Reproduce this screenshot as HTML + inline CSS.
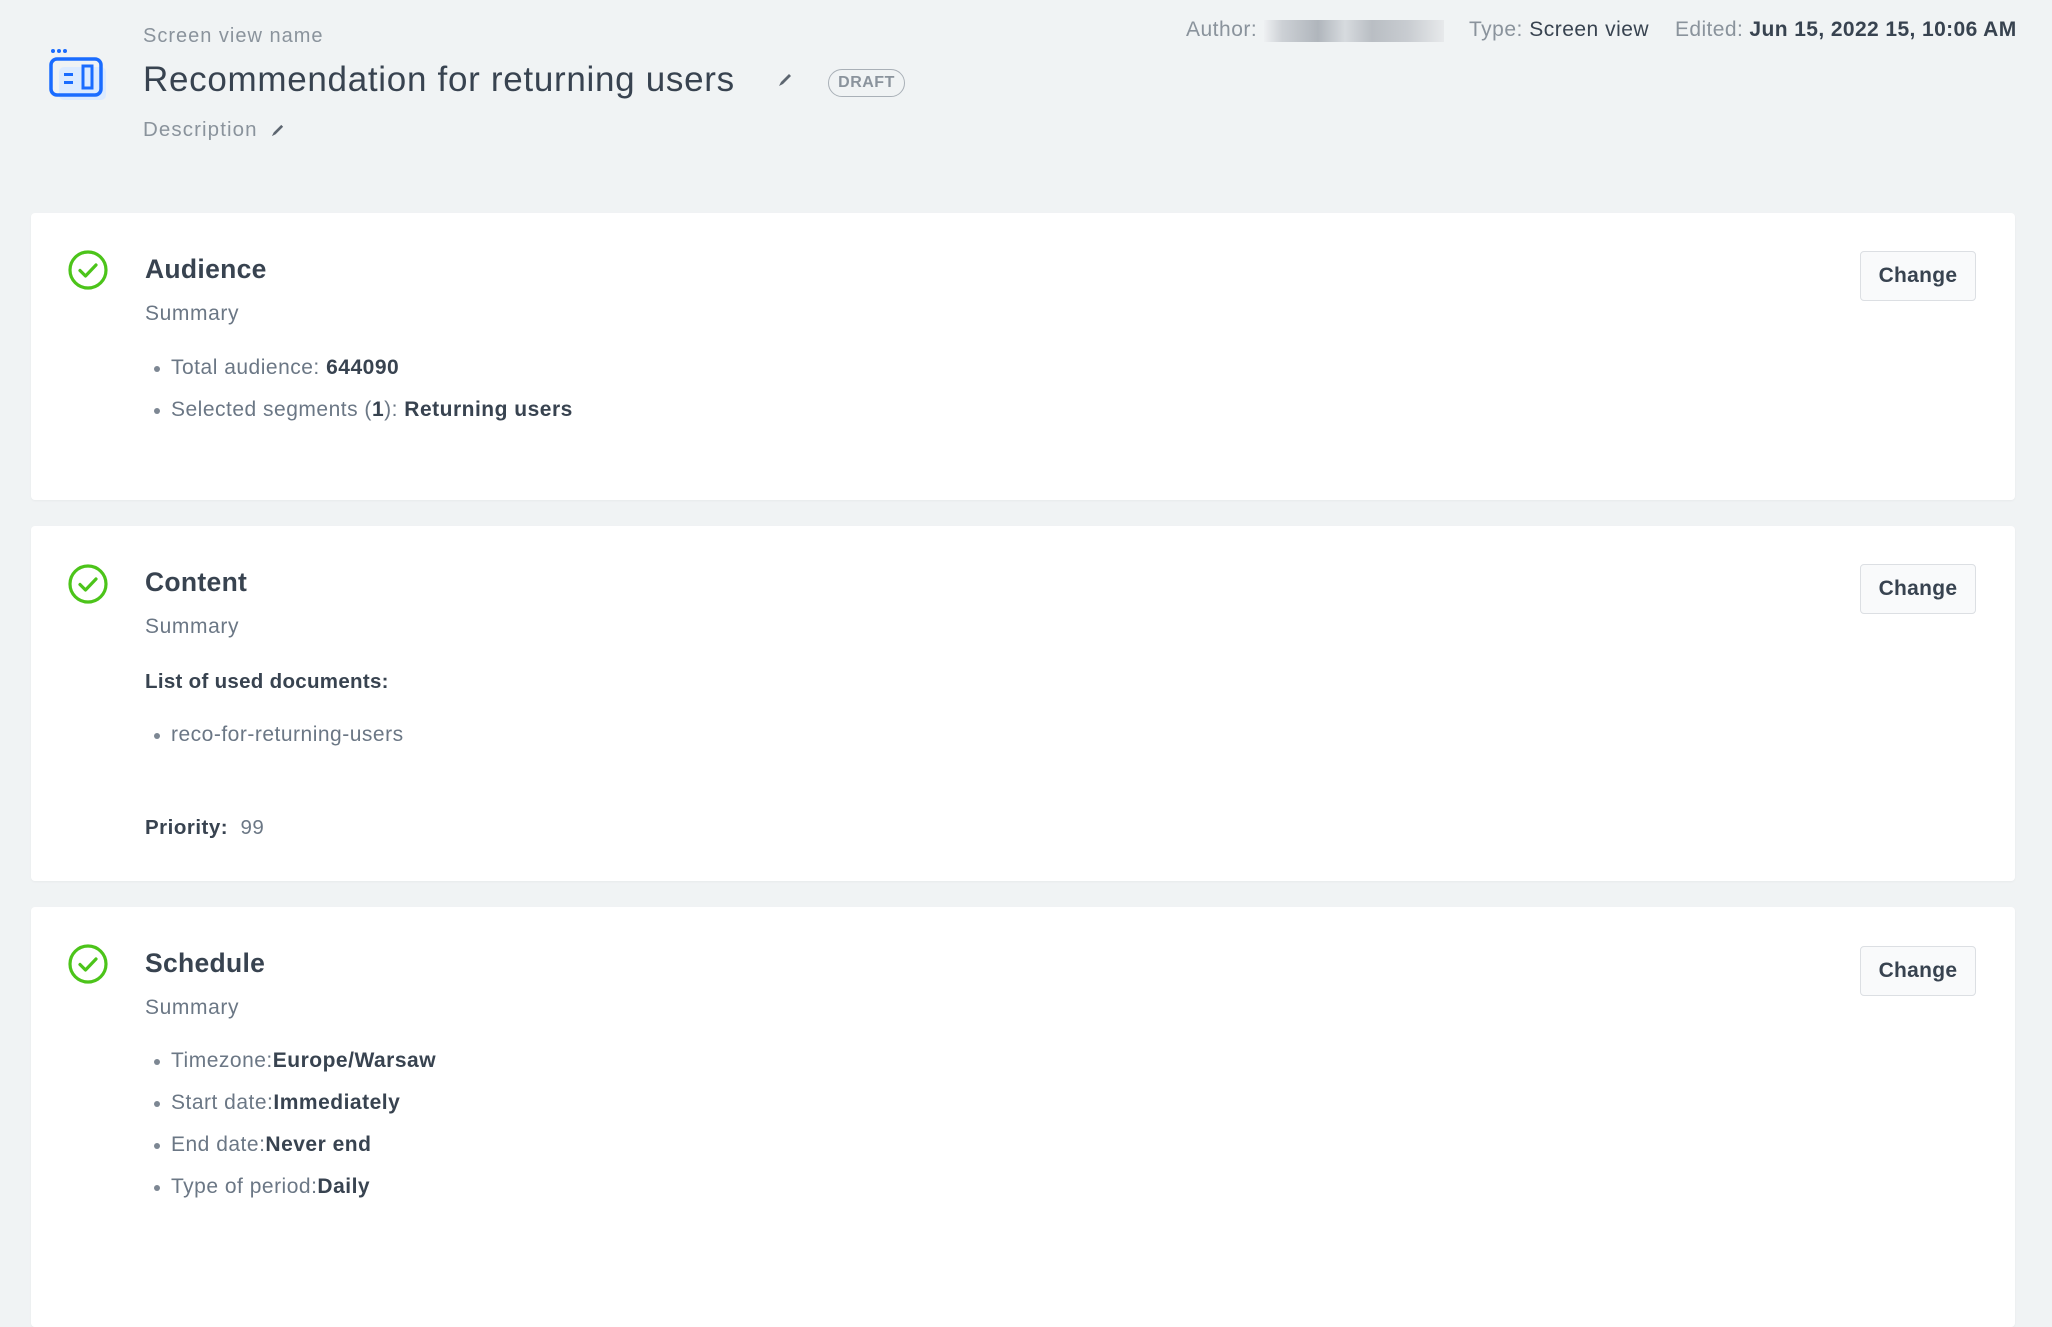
<!DOCTYPE html>
<html><head><meta charset="utf-8">
<style>
*{margin:0;padding:0;box-sizing:border-box}
html,body{width:2052px;height:1316px;overflow:hidden;background:#f0f3f4;font-family:"Liberation Sans",sans-serif;}
.a{position:absolute;white-space:nowrap}
.g{color:#8a939c}
.d{color:#384350}
.card{position:absolute;left:31px;width:1984px;background:#fff;border-radius:4px;box-shadow:0 1px 2px rgba(0,0,0,0.04)}
.h{position:absolute;left:114px;font-size:26.5px;color:#384350;font-weight:bold;line-height:30px;letter-spacing:0.3px}
.s{position:absolute;left:114px;font-size:21px;color:#6b7785;line-height:24px;letter-spacing:0.6px}
.li{position:absolute;left:140px;font-size:21px;color:#6b7785;line-height:24px;white-space:nowrap;letter-spacing:0.5px}
.li:before{content:"";position:absolute;left:-17px;top:10px;width:6px;height:6px;border-radius:50%;background:#7d8793}
.li b{color:#384350}
.btn{position:absolute;left:1829px;width:116px;height:50px;border:1.5px solid #dcdfe3;border-radius:4px;background:#f9fafb;color:#384350;font-size:21px;font-weight:bold;text-align:center;line-height:47px;letter-spacing:0.3px}
.chk{position:absolute;left:36px}
</style></head><body>

<svg class="a" style="left:48px;top:46px" width="62" height="58" viewBox="0 0 62 58">
<circle cx="5" cy="5" r="2" fill="#1a6cff"/><circle cx="11" cy="5" r="2" fill="#1a6cff"/><circle cx="17" cy="5" r="2" fill="#1a6cff"/>
<rect x="11" y="21" width="47" height="33" rx="5" fill="#dcebff"/>
<rect x="3" y="13" width="50" height="36" rx="6" fill="none" stroke="#1a6cff" stroke-width="3.5"/>
<rect x="35" y="20" width="9" height="22" fill="none" stroke="#1a6cff" stroke-width="3"/>
<rect x="16" y="27" width="9" height="3" fill="#1a6cff"/><rect x="16" y="35" width="9" height="3" fill="#1a6cff"/>
</svg>

<div class="a g" style="left:143px;top:25px;font-size:20px;letter-spacing:1px">Screen view name</div>
<div class="a d" style="left:143px;top:60px;font-size:35px;font-weight:500;letter-spacing:0.7px">Recommendation for returning users</div>
<svg class="a" style="left:777px;top:72px" width="16" height="16" viewBox="0 0 16 16"><path d="M2 14 L4 10 L12 2 L14 4 L6 12 Z" fill="#5d6670"/></svg>
<div class="a" style="left:828px;top:69px;width:77px;height:28px;border:1.5px solid #a9b0b7;border-radius:14px;color:#8a939c;font-size:16px;font-weight:bold;text-align:center;line-height:25px;letter-spacing:0.5px">DRAFT</div>
<div class="a g" style="left:143px;top:118px;font-size:20.5px;letter-spacing:1.1px">Description</div>
<svg class="a" style="left:270px;top:123px" width="15" height="15" viewBox="0 0 16 16"><path d="M2 14 L4 10 L12 2 L14 4 L6 12 Z" fill="#5d6670"/></svg>

<div class="a" style="left:1186px;top:18px;font-size:21px;letter-spacing:0.5px"><span class="g">Author:</span></div>
<div class="a" style="left:1264px;top:20px;width:180px;height:22px;background:linear-gradient(90deg,#eef0f2,#c9cdd2 10%,#a9afb6 30%,#d4d8dc 45%,#b3b8be 60%,#c4c8cd 80%,#e6e8ea);opacity:.9"></div>
<div class="a" style="left:1469px;top:18px;font-size:21px;letter-spacing:0.5px"><span class="g">Type: </span><span class="d" style="font-weight:500">Screen view</span></div>
<div class="a" style="left:1675px;top:18px;font-size:21px;letter-spacing:0.4px"><span class="g">Edited: </span><span class="d" style="font-weight:bold">Jun 15, 2022 15, 10:06 AM</span></div>

<!-- Card 1 -->
<div class="card" style="top:213px;height:287px">
<svg class="chk" style="top:36px" width="42" height="42" viewBox="0 0 42 42"><circle cx="21" cy="21" r="18" fill="none" stroke="#4cc41a" stroke-width="3.2"/><path d="M13 21.5 L18.5 27 L29 16" fill="none" stroke="#4cc41a" stroke-width="3.2" stroke-linecap="round" stroke-linejoin="round"/></svg>
<div class="h" style="top:41px">Audience</div>
<div class="s" style="top:89px">Summary</div>
<div class="li" style="top:143px">Total audience: <b>644090</b></div>
<div class="li" style="top:185px">Selected segments (<b>1</b>): <b>Returning users</b></div>
<div class="btn" style="top:38px">Change</div>
</div>

<!-- Card 2 -->
<div class="card" style="top:526px;height:355px">
<svg class="chk" style="top:37px" width="42" height="42" viewBox="0 0 42 42"><circle cx="21" cy="21" r="18" fill="none" stroke="#4cc41a" stroke-width="3.2"/><path d="M13 21.5 L18.5 27 L29 16" fill="none" stroke="#4cc41a" stroke-width="3.2" stroke-linecap="round" stroke-linejoin="round"/></svg>
<div class="h" style="top:41px">Content</div>
<div class="s" style="top:89px">Summary</div>
<div class="s" style="top:144px;color:#384350;font-weight:bold;font-size:20.5px;letter-spacing:0.3px">List of used documents:</div>
<div class="li" style="top:197px">reco-for-returning-users</div>
<div class="s" style="top:290px;font-size:20.5px;letter-spacing:0.5px"><b style="color:#384350">Priority:</b>&nbsp; 99</div>
<div class="btn" style="top:38px">Change</div>
</div>

<!-- Card 3 -->
<div class="card" style="top:907px;height:420px">
<svg class="chk" style="top:36px" width="42" height="42" viewBox="0 0 42 42"><circle cx="21" cy="21" r="18" fill="none" stroke="#4cc41a" stroke-width="3.2"/><path d="M13 21.5 L18.5 27 L29 16" fill="none" stroke="#4cc41a" stroke-width="3.2" stroke-linecap="round" stroke-linejoin="round"/></svg>
<div class="h" style="top:41px">Schedule</div>
<div class="s" style="top:89px">Summary</div>
<div class="li" style="top:142px">Timezone:<b>Europe/Warsaw</b></div>
<div class="li" style="top:184px">Start date:<b>Immediately</b></div>
<div class="li" style="top:226px">End date:<b>Never end</b></div>
<div class="li" style="top:268px">Type of period:<b>Daily</b></div>
<div class="btn" style="top:39px">Change</div>
</div>

</body></html>
